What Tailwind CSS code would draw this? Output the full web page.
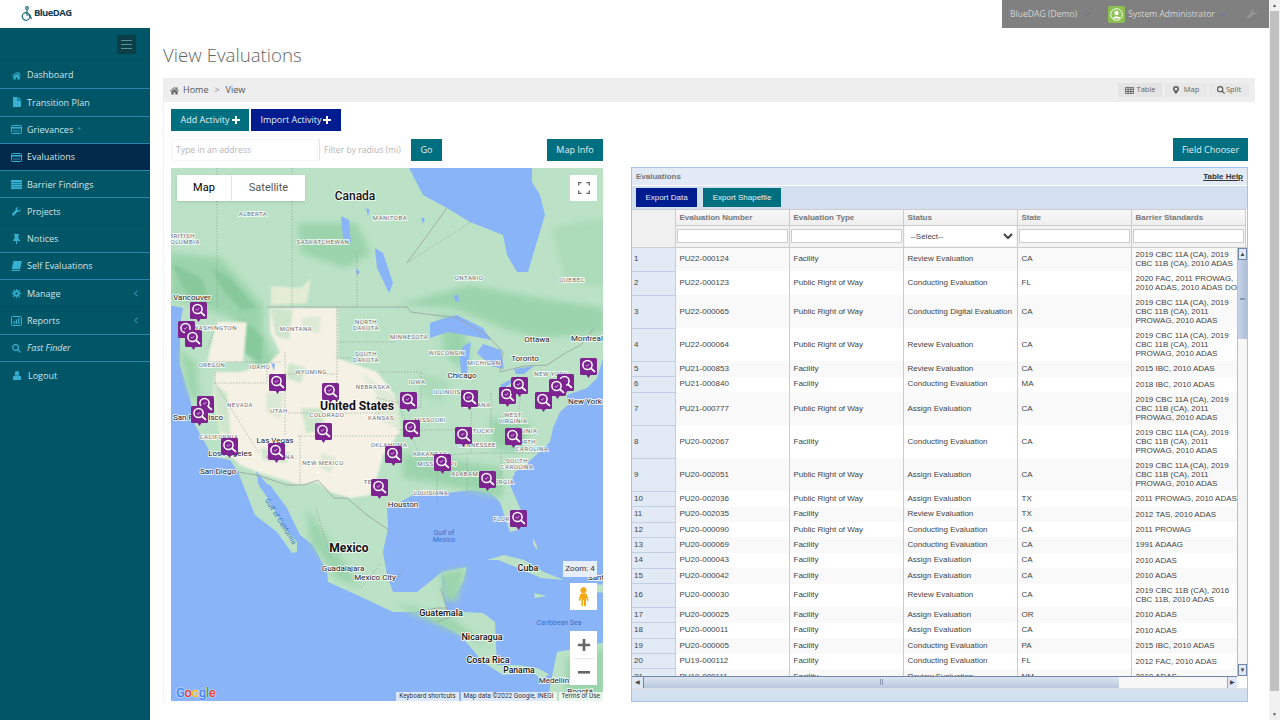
<!DOCTYPE html>
<html lang="en">
<head>
    <meta charset="UTF-8">
    <meta name="viewport" content="width=device-width, initial-scale=1.0">
    <title>View Evaluations</title>
    <script src="https://cdn.jsdelivr.net/npm/@tailwindcss/browser@4"></script>
</head>
<body class="bg-white font-['Open_Sans',sans-serif] overflow-hidden">
<div class="flex w-[1280px] h-[720px] overflow-hidden">
    <div class="w-[1269px] h-[720px] flex flex-col shrink-0">

        <!-- top bar -->
        <header class="h-[28px] flex justify-between shrink-0">
            <div class="flex items-center pl-[21px] gap-[1px] pb-[1px]">
                <svg width="12" height="16" viewBox="0 0 12 16" fill="none" stroke="#1c6a7c" stroke-width="1.2"><circle cx="6" cy="2" r="1.3"/><path d="M6 4v5h3l1.5 4"/><circle cx="5" cy="10.500" r="3.800"/></svg>
                <span class="text-[9.500px] font-bold text-[#123c55] tracking-[-0.6px]">BlueDAG</span>
            </div>
            <div class="w-[267px] bg-[#808080] flex items-center text-[8.600px] text-[#d4d4d4] pl-[8px]">
                <span>BlueDAG (Demo)</span>
                <svg class="ml-[6px] shrink-0" width="7" height="5" viewBox="0 0 7 5" fill="none" stroke="#68748a"><path d="M.5 1l3 3 3-3"/></svg>
                <div class="ml-[18px] w-[17px] h-[17px] rounded-[2px] bg-[#8cc152] flex items-center justify-center shrink-0">
                    <svg width="13" height="13" viewBox="0 0 13 13"><circle cx="6.500" cy="6.500" r="5.800" fill="none" stroke="#fff"/><circle cx="6.500" cy="5" r="2.200" fill="#fff"/><path d="M2.500 10.500c1-2.600 7-2.600 8 0z" fill="#fff"/></svg>
                </div>
                <span class="ml-[3px]">System Administrator</span>
                <svg class="ml-[5px] shrink-0" width="7" height="5" viewBox="0 0 7 5" fill="none" stroke="#68748a"><path d="M.5 1l3 3 3-3"/></svg>
                <svg class="ml-[20px] shrink-0" width="10" height="10" viewBox="0 0 10 10" fill="#979797"><path d="M9.600 2.400 7.800 4 6 3.600 5.600 2 7.400.3C6-.2 4.300.6 4 2c-.1.500 0 1 .1 1.400L.4 7.200a1.300 1.300 0 0 0 1.900 1.900l3.800-3.700c1.900.5 3.900-1 3.500-3z"/></svg>
            </div>
        </header>

        <div class="flex flex-1 min-h-0">
            <!-- sidebar -->
            <aside class="w-[150px] shrink-0 bg-[#005567] text-[9px] text-[#d3e4e8]">
                <div class="h-[34px] flex items-start justify-end pt-[7px] pr-[14px] border-b border-[#004f60]">
                    <div class="w-[19px] h-[19px] bg-[#0c3e47] flex flex-col items-center justify-center gap-[3px]">
                        <span class="block w-[11px] h-px bg-[#5f8f97]"></span>
                        <span class="block w-[11px] h-px bg-[#5f8f97]"></span>
                        <span class="block w-[11px] h-px bg-[#5f8f97]"></span>
                    </div>
                </div>
                <nav>
                    <a class="h-[27.300px] flex items-center pl-[12px] gap-[6px] border-b border-[#2986ab]">
                        <svg class="w-[9px] h-[9px] shrink-0" viewBox="0 0 10 10" fill="#38b0d2"><path d="M5 1 0 5.300l.6.700L5 2.300 9.400 6l.6-.7L8.300 3.800V1.300H7v1.400zM1.500 6.200V9.500h2.600V7h1.800v2.500h2.600V6.200L5 3.200z"/></svg>
                        Dashboard</a>
                    <a class="h-[27.300px] flex items-center pl-[13px] gap-[6px] border-b border-[#2986ab]">
                        <svg class="w-[8px] h-[10px] shrink-0" viewBox="0 0 8 10" fill="#38b0d2"><path d="M0 0h4.500v3.500H8V10H0zM5.300 0 8 2.700H5.300z"/></svg>
                        Transition Plan</a>
                    <a class="h-[27.300px] flex items-center pl-[11px] gap-[5px] border-b border-[#2986ab]">
                        <svg class="w-[11px] h-[9px] shrink-0" viewBox="0 0 11 9" fill="none" stroke="#38b0d2"><rect x=".5" y=".5" width="10" height="8" rx="1"/><path d="M1 2.800h9" stroke-width="1.600"/><path d="M2 4.800h7v2.500H2z" fill="#38b0d2" fill-opacity=".4" stroke="none"/></svg>
                        Grievances<span class="text-[#38b0d2] text-[7px] ml-[-1px]">+</span></a>
                    <a class="h-[27.300px] flex items-center pl-[11px] gap-[5px] border-b border-[#2986ab] bg-[#012a4a]">
                        <svg class="w-[11px] h-[9px] shrink-0" viewBox="0 0 11 9" fill="none" stroke="#38b0d2"><rect x=".5" y=".5" width="10" height="8" rx="1"/><path d="M1 2.800h9" stroke-width="1.600"/><path d="M2 4.800h7v2.500H2z" fill="#38b0d2" fill-opacity=".4" stroke="none"/></svg>
                        Evaluations</a>
                    <a class="h-[27.300px] flex items-center pl-[11px] gap-[5px] border-b border-[#2986ab]">
                        <svg class="w-[11px] h-[9px] shrink-0" viewBox="0 0 11 9" fill="#38b0d2"><path d="M0 0h11v2H0zM0 2.600h11v1.800H0zM0 5h11v1.800H0zM0 7.300h11V9H0z"/></svg>
                        Barrier Findings</a>
                    <a class="h-[27.300px] flex items-center pl-[12px] gap-[6px] border-b border-[#004f60]">
                        <svg class="w-[9px] h-[9px] shrink-0" viewBox="0 0 10 10" fill="#38b0d2"><path d="M9.600 2.400 7.800 4 6 3.600 5.600 2 7.400.3C6-.2 4.300.6 4 2c-.1.500 0 1 .1 1.400L.4 7.200a1.300 1.300 0 0 0 1.900 1.900l3.800-3.700c1.900.5 3.900-1 3.500-3z"/></svg>
                        Projects</a>
                    <a class="h-[27.300px] flex items-center pl-[13px] gap-[7px] border-b border-[#2986ab]">
                        <svg class="w-[7px] h-[10px] shrink-0" viewBox="0 0 7 10" fill="#38b0d2"><path d="M1 0h5v1L5.300 1.500V4.500L7 6v1H4V10H3V7H0V6l1.700-1.500v-3L1 1z"/></svg>
                        Notices</a>
                    <a class="h-[27.300px] flex items-center pl-[11px] gap-[5px] border-b border-[#2986ab]">
                        <svg class="w-[11px] h-[10px] shrink-0" viewBox="0 0 11 10" fill="#38b0d2"><path d="M2.500 0H11L9 8H.8zM.6 8.800h8.600L9 10H1.200a.8.8 0 0 1-.6-1.200z"/></svg>
                        Self Evaluations</a>
                    <a class="h-[27.300px] flex items-center pl-[12px] gap-[6px] border-b border-[#004f60]">
                        <svg class="w-[9px] h-[9px] shrink-0" viewBox="0 0 10 10" fill="none" stroke="#38b0d2"><circle cx="5" cy="5" r="2.300" stroke-width="1.800"/><path d="M5 0v2M5 8v2M0 5h2M8 5h2M1.500 1.500 3 3M7 7l1.500 1.500M8.500 1.500 7 3M3 7 1.500 8.500" stroke-width="1.500"/></svg>
                        Manage
                        <svg class="ml-auto mr-[12px]" width="4" height="7" viewBox="0 0 4 7" fill="none" stroke="#38b0d2"><path d="M3.500 .7.800 3.500l2.700 2.800"/></svg></a>
                    <a class="h-[27.300px] flex items-center pl-[11px] gap-[5px] border-b border-[#2986ab]">
                        <svg class="w-[11px] h-[10px] shrink-0" viewBox="0 0 11 10" fill="none" stroke="#38b0d2"><rect x=".5" y=".5" width="10" height="9" rx="1"/><path d="M2.500 5v3h1.300V5zM4.800 3.500V8h1.300V3.500zM7.200 2v6h1.300V2z" fill="#38b0d2" stroke="none"/></svg>
                        Reports
                        <svg class="ml-auto mr-[12px]" width="4" height="7" viewBox="0 0 4 7" fill="none" stroke="#38b0d2"><path d="M3.500 .7.800 3.500l2.700 2.800"/></svg></a>
                    <a class="h-[27.300px] flex items-center pl-[12px] gap-[6px] border-b border-[#2986ab] italic">
                        <svg class="w-[9px] h-[9px] shrink-0" viewBox="0 0 10 10" fill="none" stroke="#38b0d2" stroke-width="1.400"><circle cx="4" cy="4" r="3.200"/><path d="m6.500 6.500 3 3"/></svg>
                        Fast Finder</a>
                    <a class="h-[27.300px] flex items-center pl-[13px] gap-[7px]">
                        <svg class="w-[8px] h-[9px] shrink-0" viewBox="0 0 8 9" fill="#38b0d2"><circle cx="4" cy="2.200" r="2.200"/><path d="M0 9V6.500C0 5.300 1 4.600 2 4.600h4c1 0 2 .7 2 1.900V9z"/></svg>
                        Logout</a>
                </nav>
            </aside>

            <!-- main -->
            <main class="flex-1 min-w-0 pl-[13px] pr-[14px]">
                <h1 class="h-[50px] pt-[13px] text-[18.700px] leading-[28px] font-light text-[#666]">View Evaluations</h1>

                <div class="h-[24px] bg-[#eeeeee] flex items-center justify-between pl-[7px] pr-[6px] text-[9px] text-[#555]">
                    <div class="flex items-center gap-[3px]">
                        <svg class="mr-[1px]" width="9" height="9" viewBox="0 0 10 10" fill="#666"><path d="M5 1 0 5.300l.6.700L5 2.300 9.400 6l.6-.7L8.300 3.800V1.300H7v1.400zM1.500 6.200V9.500h2.600V7h1.800v2.500h2.600V6.200L5 3.200z"/></svg>
                        <span>Home</span><span class="mx-[3px] text-[#888]">&gt;</span><span>View</span>
                    </div>
                    <div class="flex items-center text-[7.500px] text-[#666]">
                        <span class="w-[44px] h-[14px] bg-[#e4e4e4] flex items-center justify-center gap-[3px]">
                            <svg width="9" height="7" viewBox="0 0 9 7" fill="none" stroke="#555" stroke-width=".8"><path d="M.4.400h8.200v6.200H.4zM.4 2.400h8.200M.4 4.500h8.200M3.100.4v6.200M5.900.4v6.200"/></svg>Table</span>
                        <span class="w-[42px] h-[14px] ml-[3px] bg-[#e8e8e8] flex items-center justify-center gap-[5px]">
                            <svg width="6" height="8" viewBox="0 0 6 8" fill="#555"><path d="M3 0a3 3 0 0 1 3 3C6 4.500 3 8 3 8S0 4.500 0 3a3 3 0 0 1 3-3zm0 1.500a1.500 1.500 0 1 0 0 3 1.500 1.500 0 0 0 0-3z"/></svg>Map</span>
                        <span class="w-[40px] h-[14px] ml-[2px] bg-[#e8e8e8] flex items-center justify-center gap-[1px]">
                            <svg width="8" height="8" viewBox="0 0 8 8" fill="none" stroke="#555" stroke-width="1.100"><circle cx="3.200" cy="3.200" r="2.600"/><path d="m5.200 5.200 2.400 2.400"/></svg>Split</span>
                    </div>
                </div>

                <div class="flex border-l border-[#f4f4f4] pl-[7px] pt-[7px]">
                    <!-- left column -->
                    <section class="w-[432px] shrink-0">
                        <div class="flex gap-[2px] h-[22px] text-[9px] text-[#e6f0f2]">
                            <button class="w-[78px] bg-[#006f80] flex items-center justify-center gap-[2px]">Add Activity
                                <svg width="8" height="8" viewBox="0 0 8 8" fill="#fff"><path d="M3 0h2v3h3v2H5v3H3V5H0V3h3z"/></svg></button>
                            <button class="w-[90px] bg-[#001c8f] flex items-center justify-center gap-[2px]">Import Activity
                                <svg width="8" height="8" viewBox="0 0 8 8" fill="#fff"><path d="M3 0h2v3h3v2H5v3H3V5H0V3h3z"/></svg></button>
                        </div>
                        <div class="flex mt-[8px] h-[22px] text-[8.600px]">
                            <input class="w-[147px] pl-[4px] border border-[#f6f6f6] placeholder:text-[#b5b5b5]" placeholder="Type in an address">
                            <input class="w-[90px] ml-[1px] pl-[4px] border-l border-[#e5e5e5] placeholder:text-[#b5b5b5]" placeholder="Filter by radius (mi)">
                            <button class="w-[31px] ml-[2px] bg-[#006f80] text-[#e6f0f2] text-[9px]">Go</button>
                            <button class="w-[56px] ml-auto bg-[#006f80] text-[#e6f0f2] text-[9px]">Map Info</button>
                        </div>
                        <!-- map -->
                        <div class="relative mt-[7px] w-[432px] h-[533px] overflow-hidden bg-[#8ab4f8]">
                            <svg width="432" height="533" viewBox="0 0 432 533" class="absolute inset-0">
                                <defs>
                                    <g id="pin">
                                        <path d="M1.500 0h14a1.500 1.500 0 0 1 1.500 1.500v14a1.500 1.500 0 0 1-1.500 1.500H10.500L8.500 20 6.500 17H1.500A1.500 1.500 0 0 1 0 15.500v-14A1.500 1.500 0 0 1 1.500 0z" fill="#7d2491"/>
                                        <circle cx="7.500" cy="7" r="4.600" fill="none" stroke="#fff" stroke-width="1.500"/>
                                        <path d="m11 10.400 3.400 3" stroke="#fff" stroke-width="1.900" stroke-linecap="round"/>
                                        <path d="m5.800 7 1.300 1.300 2.200-2.400" fill="none" stroke="#e6c8ee" stroke-width=".8"/>
                                    </g>
                                </defs>
                                <!-- land -->
                                <path fill="#bbe2c6" d="M-2 137 12 140 9 157 9 197 14 214 19 230 24 257 42 289 59 292 67 304 84 347 106 364 121 385 126 384 126 374 112 357 99 334 86 314 99 317 116 340 129 367 142 377 156 404 157 414 186 427 222 444 246 444 266 454 289 467 312 494 332 507 362 504 370 512 378 506 366 500 346 497 326 497 324 454 312 445 292 444 276 442 272 425 271 404 296 399 292 414 282 430 271 404 246 424 222 424 216 407 212 384 217 360 216 340 229 334 246 325 276 325 299 322 319 324 329 334 339 364 347 362 352 347 339 317 344 304 362 290 379 274 382 260 389 244 397 237 396 227 416 220 426 210 434 184 434 -2 361 -2 361 14 369 27 374 47 364 80 357 104 346 104 336 87 332 67 299 54 276 40 252 27 237 -2 -2 -2Z"/>
                                <path fill="#bbe2c6" d="M376 533 386 484 409 480 434 474 434 535 376 535Z"/>
                                <path fill="#bbe2c6" d="M316 392 333 387 353 392 373 404 393 412 370 410 347 400 327 392ZM363 425 376 428 364 430ZM410 415 434 417 434 425 415 423ZM362 370 366 378 366 382 362 376Z"/>
                                <!-- forest -->
                                <g fill="#9bd4ac" class="blur-[3px]">
                                    <path d="M-2 85 50 90 92 137 92 165 105 195 85 200 62 150 30 140 -2 130Z"/>
                                    <path d="M126 55 185 55 200 85 175 100 130 85Z"/>
                                    <path d="M226 137 299 117 366 130 434 140 434 165 366 170 332 160 282 140 232 137Z"/>
                                    <path d="M232 285 332 300 332 330 266 315 232 310Z"/>
                                    <path d="M320 250 360 255 350 285 320 280Z"/>
                                    <path d="M270 145 290 152 300 190 290 200 272 185Z"/>
                                    <path d="M8 180 25 195 28 235 18 225Z"/>
                                    <path d="M250 205 280 215 270 235 250 225Z" fill-opacity=".5"/>
                                    <path d="M135 340 160 375 190 420 165 410 140 375Z"/>
                                    <path d="M225 435 280 450 320 480 285 465 240 445Z"/>
                                    <path d="M270 405 295 400 285 435 272 430Z"/>
                                    <path d="M395 490 434 480 434 530 395 525Z"/>
                                    <path d="M380 60 434 50 434 120 395 110Z" fill-opacity=".5"/>
                                </g>
                                <g fill="#88c99c" class="blur-[1.500px]">
                                    <path d="M40 100 60 110 85 140 70 142 50 120Z"/>
                                    <path d="M72 150 92 170 90 195 74 185Z"/>
                                    <path d="M0 95 30 110 40 135 15 125Z"/>
                                </g>
                                <!-- desert -->
                                <g fill="#f5f1e5" class="blur-[1px]">
                                    <path d="M99 140 166 140 167 174 166 190 206 204 226 230 229 264 212 287 206 310 199 327 179 330 159 324 146 314 129 317 86 304 69 297 52 280 42 227 44 204 69 204 96 197 109 184 99 164Z"/>
                                    <path d="M46 154 76 154 72 194 36 194Z"/>
                                    <path d="M100 118 130 120 140 110 136 135 100 137Z" fill="#e4ecd5"/>
                                </g>
                                <g fill="#cfe6cc" class="blur-[1px]">
                                    <path d="M99 140 122 142 118 172 105 168Z"/>
                                    <path d="M130 150 150 148 148 165 132 163Z" fill-opacity=".6"/>
                                    <path d="M118 195 135 200 130 215 115 210Z"/>
                                    <path d="M130 240 150 240 155 262 135 265Z"/>
                                    <path d="M95 225 112 225 110 250 96 245Z" fill-opacity=".7"/>
                                    <path d="M90 280 120 285 115 295 92 292Z"/>
                                    <path d="M150 285 165 290 160 305 150 300Z" fill-opacity=".6"/>
                                    <path d="M190 205 226 230 229 262 205 250 205 225Z" fill-opacity=".6"/>
                                    <path d="M42 215 56 225 60 270 48 262Z"/>
                                </g>
                                <!-- water -->
                                <g fill="#8ab4f8">
                                    <path d="M259 155 277 149 286 147 312 160 320 172 300 168 277 164 259 170Z"/>
                                    <path d="M292 178 300 174 296 205 290 205 289 190Z"/>
                                    <path d="M312 176 330 182 333 201 320 198 306 185Z"/>
                                    <path d="M329 217 349 207 343 213 332 221Z"/>
                                    <path d="M343 201 363 198 353 206 345 206Z"/>
                                    <path d="M204 80 212 85 222 115 218 125 206 100Z"/>
                                    <path d="M170 48 178 52 180 75 172 70Z"/>
                                    <path d="M85 303 95 315 112 342 126 366 120 360 102 335 88 318Z"/>
                                    <path d="M283 128 287 126 288 134 284 133ZM250 50 254 50 252 56ZM195 40 199 42 197 48ZM185 100 189 104 186 108ZM100 195 104 196 103 203Z"/>
                                </g>
                                <path d="M106 222l3-3 2-1-3 4zM145 305l2-3 1 4z" fill="#fff"/>
                                <!-- country borders -->
                                <g fill="none" stroke="#9a9fa0" stroke-width=".8">
                                    <path d="M96 139H236L240 144 286 150 316 167 332 184 329 204 353 198 376 197 396 184 410 177 423 160"/>
                                    <path d="M67 304 86 307 116 317 133 317 147 312 163 330 176 330 196 347 218 362"/>
                                    <path d="M246 444 266 440 276 440M266 454 292 444M270 420 276 442"/>
                                    <path d="M276 40 236 95"/>
                                </g>
                                <!-- state lines -->
                                <g fill="none" stroke="#8d9a93" stroke-width=".6" stroke-dasharray="1.500 1.500">
                                    <path d="M46 0V140M121 0 121 139M186 85V139M236 95 300 54"/>
                                    <path d="M37 179 46 154M36 194H110M44 204V215M44 215 88 285M44 215H96V197M114 184V268M166 139V245M114 206H166M114 245H210M129 268V317M127 268H229"/>
                                    <path d="M166 174H226M166 190H206M206 204H250V240M206 230 250 240M225 230 250 290M226 262H300M300 225V285M250 290 300 285M300 285H370M320 225V262M350 225 345 265"/>
                                    <path d="M266 300V335M296 290V325M330 285V320"/>
                                    <path d="M145 340 160 390M190 420 210 395M225 415 232 400"/>
                                </g>
                                <!-- labels -->
                                <g font-family="Roboto, sans-serif" text-anchor="middle" stroke="#ffffff" stroke-opacity=".85" stroke-width="1.800" paint-order="stroke" stroke-linejoin="round">
                                    <g font-size="6" fill="#6d6d6d" letter-spacing=".5">
                                        <text x="82" y="48">ALBERTA</text>
                                        <text x="219" y="52">MANITOBA</text>
                                        <text x="152" y="76">SASKATCHEWAN</text>
                                        <text x="11" y="70">BRITISH</text>
                                        <text x="12" y="76">COLUMBIA</text>
                                        <text x="298" y="112">ONTARIO</text>
                                        <text x="401" y="114">QUEBEC</text>
                                        <text x="44" y="162">WASHINGTON</text>
                                        <text x="125" y="163">MONTANA</text>
                                        <text x="195" y="156">NORTH</text>
                                        <text x="195" y="162">DAKOTA</text>
                                        <text x="238" y="171">MINNESOTA</text>
                                        <text x="276" y="187">WISCONSIN</text>
                                        <text x="313" y="197">MICHIGAN</text>
                                        <text x="195" y="188">SOUTH</text>
                                        <text x="195" y="194">DAKOTA</text>
                                        <text x="41" y="199">OREGON</text>
                                        <text x="89" y="201">IDAHO</text>
                                        <text x="140" y="206">WYOMING</text>
                                        <text x="380" y="208">NEW YORK</text>
                                        <text x="246" y="216">IOWA</text>
                                        <text x="202" y="221">NEBRASKA</text>
                                        <text x="276" y="226">ILLINOIS</text>
                                        <text x="306" y="239">INDIANA</text>
                                        <text x="69" y="239">NEVADA</text>
                                        <text x="108" y="245">UTAH</text>
                                        <text x="156" y="249">COLORADO</text>
                                        <text x="210" y="252">KANSAS</text>
                                        <text x="259" y="254">MISSOURI</text>
                                        <text x="342" y="249">WEST</text>
                                        <text x="342" y="255">VIRGINIA</text>
                                        <text x="306" y="265">KENTUCKY</text>
                                        <text x="352" y="265">VIRGINIA</text>
                                        <text x="48" y="271">CALIFORNIA</text>
                                        <text x="306" y="279">TENNESSEE</text>
                                        <text x="218" y="279">OKLAHOMA</text>
                                        <text x="354" y="276">NORTH</text>
                                        <text x="361" y="283">CAROLINA</text>
                                        <text x="259" y="288">ARKANSAS</text>
                                        <text x="109" y="291">ARIZONA</text>
                                        <text x="152" y="297">NEW MEXICO</text>
                                        <text x="266" y="298">MISSISSIPPI</text>
                                        <text x="346" y="295">SOUTH</text>
                                        <text x="346" y="301">CAROLINA</text>
                                        <text x="296" y="308">ALABAMA</text>
                                        <text x="329" y="316">GEORGIA</text>
                                        <text x="203" y="316">TEXAS</text>
                                        <text x="260" y="327">LOUISIANA</text>
                                        <text x="336" y="353">FLORIDA</text>
                                    </g>
                                    <g font-size="8" fill="#222">
                                        <text x="21" y="132">Vancouver</text>
                                        <text x="366" y="174">Ottawa</text>
                                        <text x="416" y="173">Montreal</text>
                                        <text x="354" y="193">Toronto</text>
                                        <text x="291" y="210">Chicago</text>
                                        <text x="414" y="236">New York</text>
                                        <text x="27" y="252">San Francisco</text>
                                        <text x="104" y="275">Las Vegas</text>
                                        <text x="59" y="288">Los Angeles</text>
                                        <text x="47" y="306">San Diego</text>
                                        <text x="232" y="339">Houston</text>
                                        <text x="172" y="403">Guadalajara</text>
                                        <text x="204" y="412">Mexico City</text>
                                        <text x="383" y="515">Medellín</text>
                                        <text x="409" y="526">Bogotá</text>
                                        <text x="425" y="412">Sant</text>
                                    </g>
                                    <g font-weight="500" fill="#111">
                                        <text x="184" y="32" font-size="12">Canada</text>
                                        <text x="186" y="242" font-size="12.200" font-weight="700">United States</text>
                                        <text x="178" y="384" font-size="12" font-weight="700">Mexico</text>
                                        <text x="357" y="403" font-size="9">Cuba</text>
                                        <text x="270" y="448" font-size="9">Guatemala</text>
                                        <text x="311" y="472" font-size="9">Nicaragua</text>
                                        <text x="317" y="495" font-size="9">Costa Rica</text>
                                        <text x="348" y="505" font-size="8.500">Panama</text>
                                    </g>
                                    <g font-size="7" fill="#3a6fc9" stroke="none">
                                        <text x="273" y="367">Gulf of</text>
                                        <text x="273" y="374">Mexico</text>
                                        <text x="388" y="457">Caribbean Sea</text>
                                        <text x="112" y="357" transform="rotate(58 112 352)">Gulf of California</text>
                                    </g>
                                </g>
                                <!-- markers -->
                                <g>
                                    <use href="#pin" x="19" y="134"/>
                                    <use href="#pin" x="7" y="153"/>
                                    <use href="#pin" x="14" y="162"/>
                                    <use href="#pin" x="26" y="228"/>
                                    <use href="#pin" x="20" y="238"/>
                                    <use href="#pin" x="98" y="206"/>
                                    <use href="#pin" x="151" y="215"/>
                                    <use href="#pin" x="144" y="255"/>
                                    <use href="#pin" x="50" y="270"/>
                                    <use href="#pin" x="97" y="275"/>
                                    <use href="#pin" x="200" y="311"/>
                                    <use href="#pin" x="214" y="278"/>
                                    <use href="#pin" x="232" y="252"/>
                                    <use href="#pin" x="229" y="224"/>
                                    <use href="#pin" x="263" y="286"/>
                                    <use href="#pin" x="284" y="259"/>
                                    <use href="#pin" x="290" y="222"/>
                                    <use href="#pin" x="308" y="303"/>
                                    <use href="#pin" x="334" y="260"/>
                                    <use href="#pin" x="328" y="219"/>
                                    <use href="#pin" x="340" y="209"/>
                                    <use href="#pin" x="364" y="224"/>
                                    <use href="#pin" x="386" y="206"/>
                                    <use href="#pin" x="378" y="211"/>
                                    <use href="#pin" x="409" y="190"/>
                                    <use href="#pin" x="339" y="342"/>
                                </g>
                            </svg>

                            <!-- map controls -->
                            <div class="absolute left-[6px] top-[7px] h-[26px] w-[128px] bg-white flex items-center text-[11px] font-['Roboto',sans-serif] shadow-sm">
                                <span class="w-[55px] text-center text-black border-r border-[#e6e6e6] leading-[26px]">Map</span>
                                <span class="flex-1 text-center text-[#565656]">Satellite</span>
                            </div>
                            <div class="absolute right-[6px] top-[7px] w-[27px] h-[26px] bg-white flex items-center justify-center">
                                <svg width="12" height="12" viewBox="0 0 12 12" fill="none" stroke="#666" stroke-width="1.300"><path d="M.7 3.500V.7h2.800M8.500.7h2.800v2.800M11.300 8.500v2.800H8.500M3.500 11.300H.7V8.500"/></svg>
                            </div>
                            <div class="absolute right-[6px] top-[393px] w-[34px] h-[16px] bg-[#e8eef8] text-[8px] text-[#333] flex items-center justify-center font-['Roboto',sans-serif]">Zoom: 4</div>
                            <div class="absolute right-[6px] top-[415px] w-[27px] h-[27px] bg-white flex items-center justify-center">
                                <svg width="13" height="20" viewBox="0 0 13 20"><circle cx="6.500" cy="3.200" r="3" fill="#f5a70f"/><path d="M3.500 6.500h6l2.300 7-1.500.4-1.300-3.400V19H7v-6H6v6H4.500v-8.500l-1.300 3.400-1.500-.4z" fill="#f5a70f"/></svg>
                            </div>
                            <div class="absolute right-[6px] top-[463px] w-[27px] h-[54px] bg-white flex flex-col items-center">
                                <div class="h-[27px] flex items-center">
                                    <svg width="12" height="12" viewBox="0 0 12 12" fill="#666"><path d="M4.700 0h2.600v4.700H12v2.600H7.300V12H4.700V7.300H0V4.700h4.700z"/></svg>
                                </div>
                                <div class="w-[20px] h-px bg-[#e6e6e6]"></div>
                                <div class="h-[26px] flex items-center">
                                    <svg width="12" height="3" viewBox="0 0 12 3" fill="#666"><path d="M0 0h12v2.600H0z"/></svg>
                                </div>
                            </div>
                            <div class="absolute left-[5px] bottom-[1px] text-[13px] leading-[15px] font-medium font-['Roboto',sans-serif] tracking-[-0.3px] [text-shadow:0_0_2px_#fff]">
                                <span class="text-[#4285f4]">G</span><span class="text-[#ea4335]">o</span><span class="text-[#fbbc05]">o</span><span class="text-[#4285f4]">g</span><span class="text-[#34a853]">l</span><span class="text-[#ea4335]">e</span>
                            </div>
                            <div class="absolute right-0 bottom-0 h-[9px] flex gap-[2px] text-[6.500px] leading-[9px] text-[#333] font-['Roboto',sans-serif]">
                                <span class="bg-white/70 px-[3px]">Keyboard shortcuts</span>
                                <span class="bg-white/70 px-[3px]">Map data ©2022 Google, INEGI</span>
                                <span class="bg-white/70 px-[3px]">Terms of Use</span>
                            </div>
                        </div>
                    </section>

                    <!-- right column -->
                    <section class="w-[617px] ml-[28px] shrink-0">
                        <div class="flex justify-end mt-[29px]">
                            <button class="w-[75px] h-[23px] bg-[#006f80] text-[9px] text-[#e6f0f2]">Field Chooser</button>
                        </div>
                        <div class="mt-[6px] h-[535px] border border-[#a5c4ec] flex flex-col font-['Liberation_Sans',sans-serif] text-[8px] text-[#444]">
                            <div class="h-[18px] bg-[#e2eaf5] border-b border-white flex items-center justify-between pl-[4px] pr-[4px] shrink-0">
                                <span class="font-bold text-[#777]">Evaluations</span>
                                <span class="font-bold underline text-[#333]">Table Help</span>
                            </div>
                            <div class="h-[23px] bg-[#d3e0f0] flex items-center gap-[6px] pl-[4px] shrink-0">
                                <button class="w-[61px] h-[19px] bg-[#001c8f] text-[#e6ecf5]">Export Data</button>
                                <button class="w-[78px] h-[19px] bg-[#006f80] text-[#e6f0f2]">Export Shapefile</button>
                            </div>
                            <table class="table-fixed border-collapse w-[613px] shrink-0 border-t border-[#ccc]">
                                <colgroup><col class="w-[43px]"><col class="w-[114px]"><col class="w-[114px]"><col class="w-[114px]"><col class="w-[114px]"><col class="w-[114px]"></colgroup>
                                <tr class="h-[16px] bg-gradient-to-b from-[#f8f8f8] to-[#eeeeee] text-left font-bold text-[#777]">
                                    <th rowspan="2" class="bg-[#f0f0f0] border-r border-[#ccc]"></th>
                                    <th class="px-[4px] border-r border-b border-[#ccc] font-bold">Evaluation Number</th>
                                    <th class="px-[4px] border-r border-b border-[#ccc] font-bold">Evaluation Type</th>
                                    <th class="px-[4px] border-r border-b border-[#ccc] font-bold">Status</th>
                                    <th class="px-[4px] border-r border-b border-[#ccc] font-bold">State</th>
                                    <th class="px-[4px] border-r border-b border-[#ccc] font-bold">Barrier Standards</th>
                                </tr>
                                <tr class="h-[21px] bg-[#f3f3f3]">
                                    <td class="px-[1px] border-r border-[#ccc]"><input class="block w-full h-[14px] bg-white border border-[#ccc]"></td>
                                    <td class="px-[1px] border-r border-[#ccc]"><input class="block w-full h-[14px] bg-white border border-[#ccc]"></td>
                                    <td class="px-[1px] border-r border-[#ccc]"><select class="block w-full h-[20px] bg-white text-[8px] text-[#444] pl-[2px]"><option>--Select--</option></select></td>
                                    <td class="px-[1px] border-r border-[#ccc]"><input class="block w-full h-[14px] bg-white border border-[#ccc]"></td>
                                    <td class="px-[1px] border-r border-[#ccc]"><input class="block w-full h-[14px] bg-white border border-[#ccc]"></td>
                                </tr>
                            </table>
                            <div class="flex h-[429px] border-t border-[#ccc] shrink-0">
                                <div class="w-[605px] overflow-hidden shrink-0">
                                    <table class="table-fixed border-collapse w-[613px]">
                                        <colgroup><col class="w-[43px]"><col class="w-[114px]"><col class="w-[114px]"><col class="w-[114px]"><col class="w-[114px]"><col class="w-[114px]"></colgroup>
                                        <tbody id="rows"></tbody>
                                    </table>
                                </div>
                                <!-- grid scrollbar -->
                                <div class="w-[10px] flex flex-col bg-[#f7f7f7] border-l border-[#a5c4ec]">
                                    <div class="h-[12px] bg-[#dfe8f4] border border-[#6f86a8] flex items-center justify-center text-[6px] leading-none text-[#444]">▲</div>
                                    <div class="h-[79px] bg-gradient-to-r from-[#c6d4e8] to-[#aebfd8] flex items-center justify-center"><span class="block w-[5px] h-[2px] bg-[#8a99b0]"></span></div>
                                    <div class="flex-1"></div>
                                    <div class="h-[12px] bg-[#dfe8f4] border border-[#6f86a8] flex items-center justify-center text-[6px] leading-none text-[#444]">▼</div>
                                </div>
                            </div>
                            <div class="h-[12px] mr-[10px] flex items-stretch bg-[#f7f7f7] border-t border-[#6f86a8] shrink-0">
                                <div class="w-[12px] bg-[#dfe8f4] border-r border-[#6f86a8] flex items-center justify-center text-[6px] text-[#444]">◀</div>
                                <div class="w-[475px] bg-gradient-to-b from-[#dbe4f0] to-[#b8c8de] flex items-center justify-center"><span class="block w-[3px] h-[6px] border-x border-[#8a99b0]"></span></div>
                                <div class="flex-1"></div>
                                <div class="w-[10px] bg-[#dfe8f4] border-l border-[#9aa9c0] flex items-center justify-center text-[6px] text-[#444]">▶</div>
                            </div>
                            <div class="flex-1 bg-[#d3e0f0] border-t border-[#ddd]"></div>
                        </div>
                    </section>
                </div>
            </main>
        </div>
    </div>

    <!-- page scrollbar -->
    <div class="w-[11px] h-[720px] bg-[#f1f1f1] flex flex-col">
        <div class="h-[11px] flex items-center justify-center text-[5px] text-[#555]">▲</div>
        <div class="h-[680px] mx-px bg-[#c1c1c1]"></div>
        <div class="flex-1"></div>
        <div class="h-[11px] flex items-center justify-center text-[5px] text-[#555]">▼</div>
    </div>
</div>

<script>
    const PROW = 'Public Right of Way';
    const CBC3 = ['2019 CBC 11A (CA), 2019', 'CBC 11B (CA), 2011', 'PROWAG, 2010 ADAS'];
    const rows = [
        ['PU22-000124', 'Facility', 'Review Evaluation', 'CA', ['2019 CBC 11A (CA), 2019', 'CBC 11B (CA), 2010 ADAS']],
        ['PU22-000123', PROW, 'Conducting Evaluation', 'FL', ['2020 FAC, 2011 PROWAG,', '2010 ADAS, 2010 ADAS DOJ']],
        ['PU22-000065', PROW, 'Conducting Digital Evaluation', 'CA', CBC3],
        ['PU22-000064', PROW, 'Review Evaluation', 'CA', CBC3],
        ['PU21-000853', 'Facility', 'Review Evaluation', 'CA', ['2015 IBC, 2010 ADAS']],
        ['PU21-000840', 'Facility', 'Conducting Evaluation', 'MA', ['2018 IBC, 2010 ADAS']],
        ['PU21-000777', PROW, 'Assign Evaluation', 'CA', CBC3],
        ['PU20-002067', 'Facility', 'Conducting Evaluation', 'CA', CBC3],
        ['PU20-002051', PROW, 'Assign Evaluation', 'CA', CBC3],
        ['PU20-002036', PROW, 'Assign Evaluation', 'TX', ['2011 PROWAG, 2010 ADAS']],
        ['PU20-002035', 'Facility', 'Review Evaluation', 'TX', ['2012 TAS, 2010 ADAS']],
        ['PU20-000090', PROW, 'Conducting Evaluation', 'CA', ['2011 PROWAG']],
        ['PU20-000069', 'Facility', 'Conducting Evaluation', 'CA', ['1991 ADAAG']],
        ['PU20-000043', 'Facility', 'Assign Evaluation', 'CA', ['2010 ADAS']],
        ['PU20-000042', 'Facility', 'Assign Evaluation', 'CA', ['2010 ADAS']],
        ['PU20-000030', 'Facility', 'Review Evaluation', 'CA', ['2019 CBC 11B (CA), 2016', 'CBC 11B, 2010 ADAS']],
        ['PU20-000025', 'Facility', 'Assign Evaluation', 'OR', ['2010 ADAS']],
        ['PU20-000011', 'Facility', 'Assign Evaluation', 'CA', ['2010 ADAS']],
        ['PU20-000005', 'Facility', 'Conducting Evaluation', 'PA', ['2015 IBC, 2010 ADAS']],
        ['PU19-000112', 'Facility', 'Conducting Evaluation', 'FL', ['2012 FAC, 2010 ADAS']],
        ['PU19-000111', 'Facility', 'Review Evaluation', 'NM', ['2010 ADAS']],
    ];
    document.getElementById('rows').innerHTML = rows.map((r, i) => `
        <tr class="${i % 2 ? 'bg-white' : 'bg-[#f9f9f9]'} h-[15.400px]">
            <td class="pl-[2px] bg-[#e2eaf6] border-b border-r border-[#c3cfe0]">${i + 1}</td>
            <td class="px-[4px] border-r border-[#ccc]">${r[0]}</td>
            <td class="px-[4px] border-r border-[#ccc]">${r[1]}</td>
            <td class="px-[4px] border-r border-[#ccc] whitespace-nowrap overflow-hidden">${r[2]}</td>
            <td class="px-[4px] border-r border-[#ccc]">${r[3]}</td>
            <td class="px-[4px] py-[2.600px] leading-[9.300px] whitespace-nowrap overflow-hidden">${r[4].join('<br>')}</td>
        </tr>`).join('');
</script>
</body>
</html>
